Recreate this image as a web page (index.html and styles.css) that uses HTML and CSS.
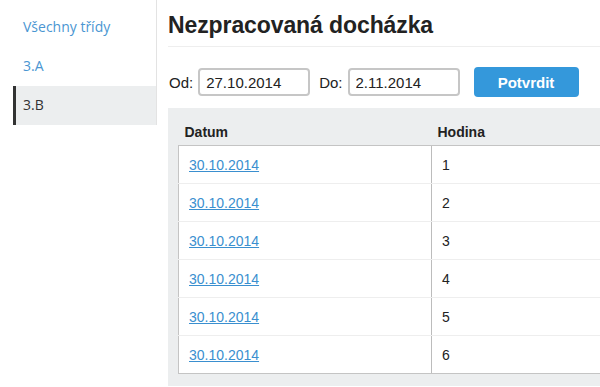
FILE: index.html
```html
<!DOCTYPE html>
<html lang="cs">
<head>
    <meta charset="UTF-8">
    <title>Nezpracovaná docházka</title>
    <link rel="stylesheet" href="styles.css">
</head>
<body>
    <div class="layout">
        <ul class="sidebar">
            <li><a href="#">Všechny třídy</a></li>
            <li><a href="#">3.A</a></li>
            <li class="active"><a href="#">3.B</a></li>
        </ul>
        <div class="main">
            <h1>Nezpracovaná docházka</h1>
            <form class="filter">
                <label>Od:</label>
                <input type="text" value="27.10.2014">
                <label class="second">Do:</label>
                <input type="text" value="2.11.2014">
                <button type="button">Potvrdit</button>
            </form>
            <div class="panel">
                <table>
                    <thead>
                        <tr><th class="col-date">Datum</th><th>Hodina</th></tr>
                    </thead>
                    <tbody>
                        <tr><td><a href="#">30.10.2014</a></td><td>1</td></tr>
                        <tr><td><a href="#">30.10.2014</a></td><td>2</td></tr>
                        <tr><td><a href="#">30.10.2014</a></td><td>3</td></tr>
                        <tr><td><a href="#">30.10.2014</a></td><td>4</td></tr>
                        <tr><td><a href="#">30.10.2014</a></td><td>5</td></tr>
                        <tr><td><a href="#">30.10.2014</a></td><td>6</td></tr>
                    </tbody>
                </table>
            </div>
        </div>
    </div>
</body>
</html>
```

FILE: styles.css
```css
html, body {
    margin: 0;
    overflow: hidden;
}
body {
    font-family: 'Liberation Sans', Arial, sans-serif;
    font-size: 14px;
    color: #222;
    background: white;
}
.layout {
    display: flex;
    align-items: flex-start;
}
.sidebar {
    list-style: none;
    margin: 0;
    padding: 8px 0 0 13px;
    width: 143px;
    flex: none;
    border-right: 1px solid #e3e3e3;
    font-family: 'Open Sans', sans-serif;
    font-size: 14px;
}
.sidebar li a {
    display: block;
    height: 39px;
    line-height: 38px;
    padding-left: 10px;
    color: #4a96d2;
    text-decoration: none;
}
.sidebar li.active a {
    background: #eceeef;
    color: #333;
    border-left: 3px solid #333;
    padding-left: 7px;
}
.main {
    flex: none;
    width: 480px;
    padding-left: 11px;
}
.main h1 {
    margin: 12px 0 0 0;
    padding: 0 0 8px 0;
    font-size: 23px;
    line-height: 26px;
    letter-spacing: -0.1px;
    color: #222;
    border-bottom: 1px solid #eee;
}
.filter {
    display: flex;
    align-items: center;
    margin: 20px 0 0 0;
    padding-left: 1px;
    font-size: 15px;
}
.filter label {
    margin-right: 5px;
}
.filter label.second {
    margin-left: 9px;
}
.filter input {
    width: 112px;
    height: 28px;
    box-sizing: border-box;
    border: 2px solid #c6c6c6;
    border-radius: 4px;
    padding: 0 6px;
    font-family: 'Liberation Sans', Arial, sans-serif;
    font-size: 15px;
    color: #222;
}
.filter button {
    margin-left: 14px;
    width: 105px;
    height: 30px;
    border: none;
    border-radius: 4px;
    background: #3498db;
    color: white;
    font-family: 'Liberation Sans', Arial, sans-serif;
    font-weight: bold;
    font-size: 15px;
}
.panel {
    margin-top: 11px;
    background: #eceeef;
    padding: 10px 0 12px 10px;
}
table {
    width: 100%;
    border-collapse: collapse;
}
th {
    text-align: left;
    font-weight: bold;
    padding: 0 6px;
    height: 27px;
    border-bottom: 1px solid #c4c4c4;
}
th.col-date {
    width: 241px;
}
td {
    background: white;
    height: 37px;
    padding: 0 10px;
    border-bottom: 1px solid #eeeeee;
}
td:first-child {
    border-left: 1px solid #c4c4c4;
    border-right: 1px solid #bcbcbc;
}
tr:last-child td {
    border-bottom: 1px solid #c4c4c4;
}
td a {
    color: #3a8fcf;
}
```
